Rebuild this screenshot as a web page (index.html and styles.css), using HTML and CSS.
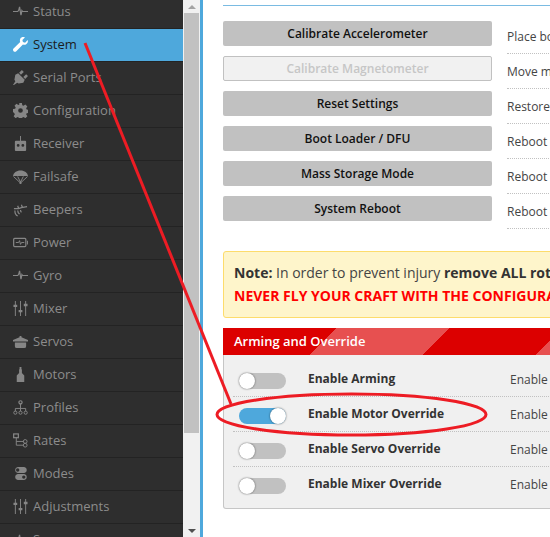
FILE: index.html
```html
<!DOCTYPE html>
<html lang="en">
<head>
  <meta charset="UTF-8" />
  <title>System</title>
  <link rel="stylesheet" href="styles.css">
</head>
<body>
  <div class="app">
    <nav class="sidebar">
      <ul class="menu">
        <li class="menuItem"><svg class="icon" viewBox="0 0 16 16"><path class="line" d="M0 8h5l1-1 1 -4 1.500 9 1-5 .7 1H16"/></svg>Status</li>
        <li class="menuItem active"><svg class="icon" viewBox="0 0 16 16"><path d="M15.600 3.300l-2.700 2.700-2.300-.6-.6-2.300L12.700.4C10.800-.3 8.700.2 7.900 1.700c-.7 1.200-.7 2.500-.2 3.500L.6 12.300c-.8.800-.8 2 0 2.900.8.800 2.100.8 2.900 0l7.100-7.200c1.100.5 2.400.4 3.500-.3 1.500-.9 2.200-2.700 1.500-4.400z"/></svg>System</li>
        <li class="menuItem"><svg class="icon" viewBox="0 0 16 16"><path d="M0 16l2.500-4-1-1.500L2.500 5l3-1.500 7 7L11 13.500l-5 1-1.500-1L1 16zM6.500 3L9.500 0l2 2-3 3zM11 7.500l3-3 2 2-3 3z"/></svg>Serial Ports</li>
        <li class="menuItem"><svg class="icon" viewBox="0 0 16 16"><path fill-rule="evenodd" d="M6.500 0h3l.4 2.300 1.300.6 2-1.300 2.100 2.100-1.300 2 .6 1.300 2.300.4v3l-2.300.4-.6 1.300 1.300 2-2.100 2.100-2-1.300-1.300.6-.4 1.900h-3l-.4-1.900-1.300-.6-2 1.300-2.100-2.100 1.300-2-.6-1.300L0 9.500v-3l2.300-.4.6-1.300-1.300-2 2.100-2.100 2 1.300 1.300-.6zM8 5.500a2.500 2.500 0 1 0 0 5 2.500 2.500 0 0 0 0-5z"/></svg>Configuration</li>
        <li class="menuItem"><svg class="icon" viewBox="0 0 16 16"><path fill-rule="evenodd" d="M7.500 0h1v5H13a1 1 0 0 1 1 1v9a1 1 0 0 1-1 1H3a1 1 0 0 1-1-1V6a1 1 0 0 1 1-1h4.500zM5.500 8.500a1.500 1.500 0 1 0 0 3 1.500 1.500 0 0 0 0-3zm5 0a1.500 1.500 0 1 0 0 3 1.500 1.500 0 0 0 0-3z"/></svg>Receiver</li>
        <li class="menuItem"><svg class="icon" viewBox="0 0 16 16"><path d="M8 1.500C3.500 1.500.5 4 0 7.500h16C15.500 4 12.500 1.500 8 1.500z"/><path class="line thin" d="M.5 8l6.500 6h2l6.500-6M5 8l3 6 3-6"/><path d="M7 13.500h2V16H7z"/></svg>Failsafe</li>
        <li class="menuItem"><svg class="icon" viewBox="0 0 16 16"><path class="line" d="M1 7h5l3-1 6-1M5 4l1 3M9 3l1 3M2 9c0 3 1 5 3 6M5 9c0 2 1 3 2 4M8 8.500c0 1 .5 2 1 2.500"/></svg>Beepers</li>
        <li class="menuItem"><svg class="icon" viewBox="0 0 16 16"><rect class="line" x=".7" y="3.700" width="13" height="8.600" rx="1"/><path d="M15 6h1v4h-1z"/><path class="line thin" d="M3 8h3l1-2 1 4 1-2h3"/></svg>Power</li>
        <li class="menuItem"><svg class="icon" viewBox="0 0 16 16"><path class="line" d="M0 8h5l1-1 1 -4 1.500 9 1-5 .7 1H16"/></svg>Gyro</li>
        <li class="menuItem"><svg class="icon" viewBox="0 0 16 16"><path d="M2 0h1v4h1.500v2.500H3V16H2V6.500H.5V4H2zM7.500 0h1v9.500H10V12H8.500v4h-1v-4H6V9.500h1.500zM13 0h1v3h1.500v2.500H14V16h-1V5.500h-1.500V3H13z"/></svg>Mixer</li>
        <li class="menuItem"><svg class="icon" viewBox="0 0 16 16"><path d="M7 2h2v1.500l7 3V8H0V6.500l7-3zM2 9h12v4a2 2 0 0 1-2 2H4a2 2 0 0 1-2-2z"/></svg>Servos</li>
        <li class="menuItem"><svg class="icon" viewBox="0 0 16 16"><path d="M7 0h2v2l.5 1v3.500L12 9v7H4V9l2.500-2.500V3L7 2z"/></svg>Motors</li>
        <li class="menuItem"><svg class="icon" viewBox="0 0 16 16"><circle class="line" cx="8" cy="2.500" r="1.700"/><path class="line thin" d="M8 4v5M2.500 12V9h11v3M8 9v3"/><circle class="line thin" cx="2.500" cy="13.500" r="1.700"/><circle class="line thin" cx="8" cy="13.500" r="1.700"/><circle class="line thin" cx="13.500" cy="13.500" r="1.700"/></svg>Profiles</li>
        <li class="menuItem"><svg class="icon" viewBox="0 0 16 16"><rect class="line" x=".7" y="1" width="5" height="4"/><path class="line thin" d="M3.500 5v8h8M3.500 9h8"/><circle class="line thin" cx="13" cy="9" r="2"/><circle class="line thin" cx="13" cy="13" r="2"/></svg>Rates</li>
        <li class="menuItem"><svg class="icon" viewBox="0 0 16 16"><path fill-rule="evenodd" d="M5 1h7a3.300 3.300 0 0 1 0 6.500H5A3.300 3.300 0 0 1 5 1zm0 1.500a1.800 1.800 0 1 0 0 3.600 1.800 1.800 0 0 0 0-3.600zM5 8.500h7a3.300 3.300 0 0 1 0 6.500H5a3.300 3.300 0 0 1 0-6.500zm6.500 1.500a1.800 1.800 0 1 0 0 3.600 1.800 1.800 0 0 0 0-3.600z"/></svg>Modes</li>
        <li class="menuItem"><svg class="icon" viewBox="0 0 16 16"><path d="M2 0h1v4h1.500v2.500H3V16H2V6.500H.5V4H2zM7.500 0h1v9.500H10V12H8.500v4h-1v-4H6V9.500h1.500zM13 0h1v3h1.500v2.500H14V16h-1V5.500h-1.500V3H13z"/></svg>Adjustments</li>
        <li class="menuItem"><svg class="icon" viewBox="0 0 16 16"><path class="line" d="M0 8h5l1-1 1 -4 1.500 9 1-5 .7 1H16"/></svg>Sensors</li>
      </ul>
    </nav>

    <div class="scrollbar">
      <div class="scrollBtn"><span class="arrowUp"></span></div>
      <div class="scrollTrack"><div class="scrollThumb"></div></div>
      <div class="scrollBtn"><span class="arrowDown"></span></div>
    </div>

    <main class="content">
      <div class="topRule"></div>

      <div class="actions">
        <div class="actionRow"><button class="btn">Calibrate Accelerometer</button><p class="actionText">Place board on flat surface, press button and wait</p></div>
        <div class="actionRow"><button class="btn disabled">Calibrate Magnetometer</button><p class="actionText">Move multirotor at least 360 degrees on all axis</p></div>
        <div class="actionRow"><button class="btn">Reset Settings</button><p class="actionText">Restore settings to default</p></div>
        <div class="actionRow"><button class="btn">Boot Loader / DFU</button><p class="actionText">Reboot into the boot loader</p></div>
        <div class="actionRow"><button class="btn">Mass Storage Mode</button><p class="actionText">Reboot into onboard flash mass storage mode</p></div>
        <div class="actionRow"><button class="btn">System Reboot</button><p class="actionText">Reboot the flight controller</p></div>
      </div>

      <div class="note">
        <p><strong>Note:</strong> In order to prevent injury <strong>remove ALL rotors</strong> before using these features.</p>
        <p class="danger">NEVER FLY YOUR CRAFT WITH THE CONFIGURATOR CONNECTED</p>
      </div>

      <section class="panel">
        <h2 class="panelTitle">Arming and Override</h2>
        <div class="panelBody">
          <div class="switchRow"><span class="toggle"><span class="knob"></span></span><span class="switchLabel">Enable Arming</span><span class="switchText">Enable arming of the motors</span></div>
          <div class="switchRow"><span class="toggle on"><span class="knob"></span></span><span class="switchLabel">Enable Motor Override</span><span class="switchText">Enable motor override</span></div>
          <div class="switchRow"><span class="toggle"><span class="knob"></span></span><span class="switchLabel">Enable Servo Override</span><span class="switchText">Enable servo override</span></div>
          <div class="switchRow"><span class="toggle"><span class="knob"></span></span><span class="switchLabel">Enable Mixer Override</span><span class="switchText">Enable mixer override</span></div>
        </div>
      </section>
    </main>
  </div>

  <svg class="markup" viewBox="0 0 550 537">
    <path d="M85 43L231 404"/>
    <ellipse cx="351.500" cy="414.500" rx="134.500" ry="20.500"/>
  </svg>
</body>
</html>
```

FILE: styles.css
```css
html, body {
  margin: 0;
  height: 100%;
  overflow: hidden;
  background: #fff;
}
.app {
  display: flex;
  height: 537px;
  overflow: hidden;
  font-family: 'Open Sans', sans-serif;
}
.sidebar {
  width: 183px;
  flex: none;
  background: #2e2e2e;
  overflow: hidden;
}
.menu {
  list-style: none;
  margin: -4px 0 0;
  padding: 0;
}
.menuItem {
  display: flex;
  align-items: center;
  gap: 5px;
  height: 30px;
  padding: 0 0 2px 13px;
  border-bottom: 1px solid #232323;
  font-size: 13px;
  color: #8c8c8c;
  white-space: nowrap;
}
.menuItem .icon {
  fill: #868686;
}
.menuItem.active {
  background: #4ea8dc;
  color: #1c1c1c;
}
.menuItem.active .icon {
  fill: #fff;
}
.icon {
  width: 15px;
  height: 15px;
  flex: none;
}
.icon .line {
  fill: none;
  stroke: #868686;
  stroke-width: 1.3;
}
.icon .thin {
  stroke-width: 1;
}
.scrollbar {
  width: 17px;
  flex: none;
  display: flex;
  flex-direction: column;
  background: #f1f1f1;
}
.scrollBtn {
  height: 13px;
  flex: none;
  display: flex;
  align-items: center;
  justify-content: center;
}
.arrowUp {
  border: 4px solid transparent;
  border-top: 0;
  border-bottom: 4px solid #a3a3a3;
}
.arrowDown {
  border: 4px solid transparent;
  border-bottom: 0;
  border-top: 4px solid #505050;
}
.scrollTrack {
  flex: 1;
  padding: 0 1px;
}
.scrollThumb {
  height: 420px;
  background: #c1c1c1;
}
.content {
  flex: 1;
  min-width: 0;
  border-left: 3px solid #4ea8dc;
  padding: 5px 0 0 20px;
  overflow: hidden;
}
.topRule {
  width: 800px;
  border-top: 1px solid #59aadb;
  opacity: .8;
  margin-bottom: 15px;
}
.actions {
  display: flex;
  flex-direction: column;
  gap: 10px;
  margin-bottom: 30px;
}
.actionRow {
  display: flex;
  gap: 15px;
  height: 25px;
  width: 800px;
}
.btn {
  width: 269px;
  height: 25px;
  flex: none;
  padding: 0;
  border: none;
  border-radius: 2px;
  background: #c1c1c1;
  color: #111;
  font: 600 12px 'Open Sans', sans-serif;
  box-sizing: border-box;
}
.btn.disabled {
  background: #f1f1f1;
  border: 1px solid #c1c1c1;
  color: #c6c6c6;
}
.actionText {
  flex: 1;
  margin: 0;
  height: 33px;
  box-sizing: border-box;
  padding-top: 8px;
  border-bottom: 1px dotted #c1c1c1;
  font-size: 12px;
  line-height: 16px;
  color: #444;
  white-space: nowrap;
}
.note {
  width: 800px;
  box-sizing: border-box;
  height: 67px;
  padding: 9px 10px;
  background: #fef5cb;
  border: 1px solid #fddc6c;
  border-radius: 3px;
  font-size: 14px;
  line-height: 23px;
  color: #444;
  white-space: nowrap;
  margin-bottom: 10px;
}
.note p {
  margin: 0;
}
.note strong {
  color: #333;
}
.danger {
  font-weight: 700;
  color: #f00;
}
.panel {
  width: 800px;
  box-sizing: border-box;
  height: 181px;
  background: #f0f0f0;
  border: 1px solid #c6c6c6;
  border-top: 0;
  border-radius: 3px;
}
.panelTitle {
  margin: 0 -1px;
  height: 27px;
  padding-left: 11px;
  font-size: 13px;
  font-weight: 600;
  line-height: 27px;
  color: #fff;
  background: repeating-linear-gradient(135deg, #dc0000 0, #dc0000 80px, #e75050 80px, #e75050 160px);
}
.panelBody {
  padding: 7px 9px 0 9px;
}
.switchRow {
  display: flex;
  align-items: center;
  height: 34px;
  padding-left: 6px;
  border-bottom: 1px dotted #c1c1c1;
  white-space: nowrap;
}
.switchRow:last-child {
  border-bottom: 0;
}
.toggle {
  width: 47px;
  height: 16px;
  flex: none;
  display: flex;
  border-radius: 8px;
  background: #c1c1c1;
  margin: 3px 22px 0 0;
}
.toggle.on {
  background: #4ea8dc;
  justify-content: flex-end;
}
.knob {
  width: 16px;
  height: 16px;
  border-radius: 50%;
  background: #fff;
  box-shadow: 0 0 2px rgba(0, 0, 0, .6);
}
.switchLabel {
  width: 202px;
  flex: none;
  margin-top: -2px;
  font-size: 12px;
  font-weight: 700;
  color: #333;
}
.switchText {
  font-size: 12px;
  color: #444;
}
.markup {
  position: absolute;
  left: 0;
  top: 0;
  width: 550px;
  height: 537px;
  fill: none;
  stroke: #ed1c24;
  stroke-width: 3;
  pointer-events: none;
}
```
